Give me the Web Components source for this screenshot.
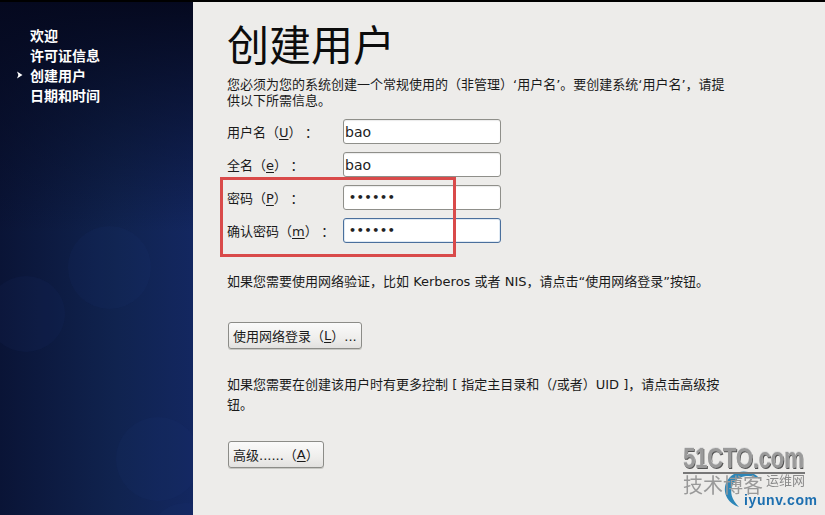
<!DOCTYPE html>
<html lang="zh-CN"><head><meta charset="utf-8">
<style>
html,body{margin:0;padding:0;width:825px;height:515px;overflow:hidden;background:#edecea}
body{font-family:"DejaVu Sans","Noto Sans CJK SC",sans-serif}
</style></head><body>
<install-page></install-page>
<script>
const FONT='"DejaVu Sans","Noto Sans CJK SC",sans-serif';
function def(name,html){
  customElements.define(name,class extends HTMLElement{
    constructor(){super();this.attachShadow({mode:'open'}).innerHTML=html;}
  });
}
def('nav-item',`<style>
:host{display:flex;align-items:center;height:20px;padding-left:30px;position:relative;color:#fff;font:700 14px ${FONT}}
svg{position:absolute;left:16px;top:6px;display:none}
:host([current]) svg{display:block}
</style><svg width="7" height="8" viewBox="0 0 7 8"><path d="M1 0.5L6.5 4L1 7.5L2.4 4Z" fill="#fff"/></svg><slot></slot>`);
def('side-bar',`<style>
:host{display:block;flex:none;width:193px;height:100%;position:relative;overflow:hidden;box-sizing:border-box;padding-top:23px;
background:linear-gradient(180deg,#05091f 0,rgba(5,9,31,0) 45%),linear-gradient(90deg,#0a1436 0,#10234f 60%,#132760 100%)}
.c{position:absolute;border-radius:50%;background:rgba(40,70,140,.08)}
.items{position:relative}
</style>
<div class="c" style="left:68px;top:224px;width:83px;height:83px"></div>
<div class="c" style="left:-13px;top:274px;width:78px;height:76px"></div>
<div class="c" style="left:116px;top:415px;width:84px;height:84px"></div>
<div class="c" style="left:150px;top:501px;width:70px;height:70px"></div>
<div class="items"><slot></slot></div>`);
def('ui-field',`<style>
:host{display:grid;grid-template-columns:116px 158px;align-items:center;height:25px;font:13px ${FONT};color:#1a1a1a}
.i{box-sizing:border-box;height:25px;border:1px solid #8f8f8a;border-radius:3px;background:#fff;display:flex;align-items:center;padding-left:1px;font-size:14px;color:#222;box-shadow:inset 0 1px 1px rgba(0,0,0,.08)}
:host([focused]) .i{border-color:#4a6f9c;box-shadow:inset 0 0 0 1px #dfe9f3}
</style><span><slot name="label"></slot></span><div class="i"><slot></slot></div>`);
def('ui-button',`<style>
:host{display:inline-flex;align-items:center;height:27px;box-sizing:border-box;margin-left:1px;padding:0 4px;border:1px solid #8c8c88;border-radius:3px;background:linear-gradient(#fafafa,#efeeec 60%,#e2e1df);font:13px ${FONT};color:#1a1a1a;box-shadow:0 1px 0 #c8c8c4;white-space:pre}
</style><slot></slot>`);
def('water-mark',`<style>
:host{position:absolute;left:680px;top:440px;width:145px;height:75px;display:block;filter:blur(.5px)}
.a{position:absolute;left:3px;top:2.5px;font:700 27px/28px "Liberation Sans",sans-serif;letter-spacing:-.5px;color:#9a9a9a;transform:scaleX(.83) scaleY(1.1);transform-origin:0 0;text-shadow:0 -1px 0 #ddd,1px 1px 0 #555}
.l{position:absolute;left:3px;top:32px;width:122px;height:2px;background:#777}
.b{position:absolute;left:3px;top:37px;font:400 20px/16px "Noto Sans CJK SC",sans-serif;color:#999}
.c{position:absolute;left:86px;top:33px;font:400 13px/14px "Noto Sans CJK SC",sans-serif;color:#8b8b8b}
.d{position:absolute;left:64px;top:53px;font:700 14px/14px "Liberation Sans",sans-serif;letter-spacing:.6px;color:#1c6fb0}
svg{position:absolute;left:39px;top:26px}
</style>
<svg width="45" height="44" viewBox="0 0 45 44"><path d="M41 13C33 3 14 2 7 17C3 28 10 38 20 41C13 34 10 26 14 18C19 9 32 8 41 13Z" fill="#2c86b8"/></svg>
<div class="a">51CTO.com</div><div class="l"></div><div class="b">技术博客</div><div class="c">运维网</div>
<div class="d">iyunv.com</div>`);
def('install-page',`<style>
:host{display:flex;width:825px;height:515px;position:relative;background:#edecea;box-sizing:border-box;padding-top:2px}
.top{position:absolute;left:0;top:0;right:0;height:2px;background:#000}
main{flex:1;padding:0 0 0 34px;color:#1a1a1a;font:13px/20px ${FONT};position:relative}
h1{margin:17px 0 0;font:400 42px/48px "Noto Sans CJK SC",sans-serif;color:#0c0c0c;height:48px}
p{margin:0;width:500px}
.intro{margin-top:10px;line-height:16px}
.fields{display:grid;gap:8px;margin-top:10px}
.net{margin-top:29px}
.b1{margin-top:30px;display:block}
.adv{margin-top:26px}
.b2{margin-top:26px;display:block}
u{text-underline-offset:2px}
.col{margin-left:10px}
.dots{letter-spacing:.7px;font-size:11px;font-weight:700;margin-left:4px}
.box{position:absolute;left:27px;top:175px;width:236px;height:80px;box-sizing:border-box;border:3px solid #d94a4a}
</style>
<div class="top"></div>
<side-bar>
<nav-item>欢迎</nav-item><nav-item>许可证信息</nav-item><nav-item current>创建用户</nav-item><nav-item>日期和时间</nav-item>
</side-bar>
<main>
<h1>创建用户</h1>
<p class="intro">您必须为您的系统创建一个常规使用的（非管理）‘用户名’。要创建系统‘用户名’，请提供以下所需信息。</p>
<div class="fields">
<ui-field><span slot="label">用户名（<u>U</u>）<span class="col">：</span></span>bao</ui-field>
<ui-field><span slot="label">全名（<u>e</u>）<span class="col">：</span></span>bao</ui-field>
<ui-field><span slot="label">密码（<u>P</u>）<span class="col">：</span></span><span class="dots">••••••</span></ui-field>
<ui-field focused><span slot="label">确认密码（<u>m</u>）<span class="col">：</span></span><span class="dots">••••••</span></ui-field>
</div>
<p class="net">如果您需要使用网络验证，比如 Kerberos 或者 NIS，请点击“使用网络登录”按钮。</p>
<div class="b1"><ui-button>使用网络登录（<u>L</u>）...</ui-button></div>
<p class="adv">如果您需要在创建该用户时有更多控制 [ 指定主目录和（/或者）UID ]，请点击高级按钮。</p>
<div class="b2"><ui-button>高级......（<u>A</u>）</ui-button></div>
<div class="box"></div>
</main>
<water-mark></water-mark>`);
</script>
</body></html>
